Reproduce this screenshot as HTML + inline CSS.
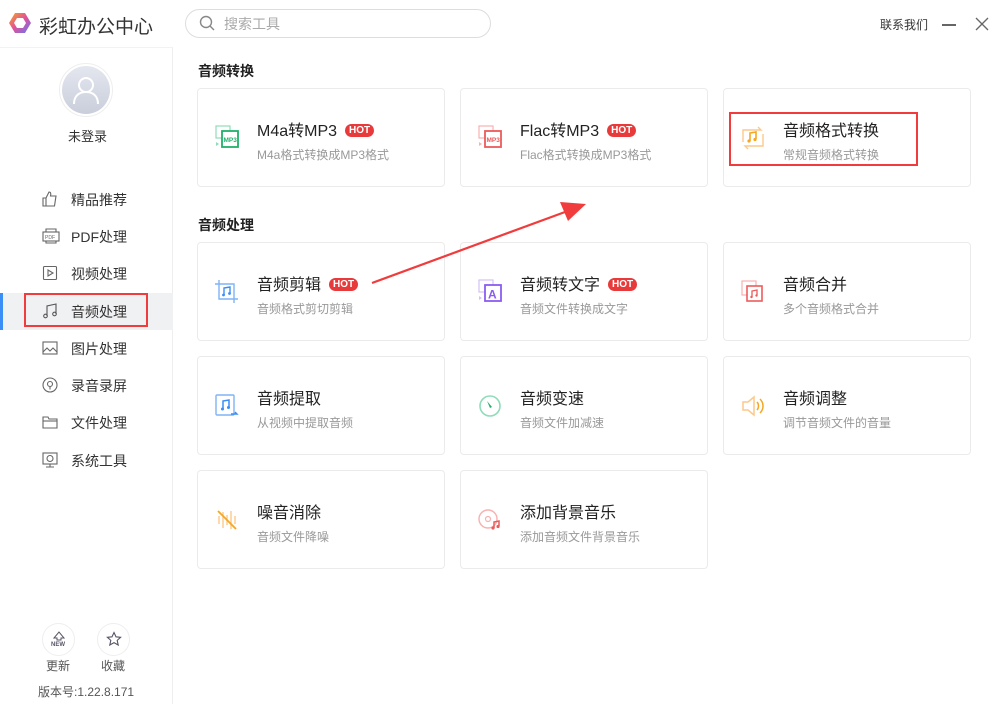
<!DOCTYPE html>
<html><head><meta charset="utf-8"><style>
*{margin:0;padding:0;box-sizing:border-box}
body{width:1000px;height:704px;background:#fff;font-family:"Liberation Sans","Noto Sans CJK SC",sans-serif;position:relative;overflow:hidden;color:#222}
.a{position:absolute}
.card{position:absolute;width:248px;height:99px;border:1px solid #ebebeb;border-radius:4px;background:#fff}
.card .t{position:absolute;left:59px;top:28px;font-size:16px;color:#222;white-space:nowrap}
.card .s{position:absolute;left:59px;top:57px;font-size:12px;color:#999;white-space:nowrap}
.card svg{position:absolute;left:16px;top:36px}
.hot{display:inline-block;background:#e83a3a;color:#fff;font-size:10px;font-weight:bold;border-radius:8px;padding:0 4px;line-height:13px;vertical-align:3px;margin-left:8px}
.nav{position:absolute;left:0;width:173px;height:37px;font-size:14px;color:#333}
.nav span{position:absolute;left:71px;top:9px}
.nav svg{position:absolute;left:42px;top:10px}
.sec{position:absolute;left:198px;font-size:14px;font-weight:bold;color:#222}
</style></head><body>
<!-- header -->
<svg class="a" style="left:8px;top:11px" width="24" height="24" viewBox="0 0 24 24"><defs><linearGradient id="g" x1="0" y1="0" x2="1" y2="1"><stop offset="0" stop-color="#f5a623"/><stop offset=".5" stop-color="#e0509b"/><stop offset="1" stop-color="#5b7cf5"/></linearGradient></defs><path d="M7 2h10l6 10-6 10H7L1 12z" fill="url(#g)"/><path d="M9 7h6l3 5-3 5H9l-3-5z" fill="#fff"/></svg>
<div class="a" style="left:39px;top:12px;font-size:19px;color:#333">彩虹办公中心</div>
<div class="a" style="left:185px;top:9px;width:306px;height:29px;border:1px solid #ddd;border-radius:15px"></div>
<svg class="a" style="left:199px;top:15px" width="16" height="16" viewBox="0 0 16 16"><circle cx="7" cy="7" r="5.5" fill="none" stroke="#888" stroke-width="1.4"/><path d="M11 11l4 4" stroke="#888" stroke-width="1.4"/></svg>
<div class="a" style="left:224px;top:14px;font-size:14px;color:#aaa">搜索工具</div>
<div class="a" style="left:880px;top:16px;font-size:12px;color:#333">联系我们</div>
<div class="a" style="left:942px;top:24px;width:14px;height:1.5px;background:#666"></div>
<svg class="a" style="left:975px;top:17px" width="14" height="14" viewBox="0 0 14 14"><path d="M1 1l12 12M13 1L1 13" stroke="#666" stroke-width="1.3"/></svg>
<!-- sidebar -->
<div class="a" style="left:0;top:47px;width:173px;height:657px;border-right:1px solid #eee;border-top:1px solid #f2f2f2"></div>
<div class="a" style="left:59px;top:63px;width:54px;height:54px;border-radius:50%;border:1px solid #eee;background:#fff"></div>
<div class="a" style="left:62px;top:66px;width:48px;height:48px;border-radius:50%;background:linear-gradient(#e4e7ef,#c9cedb)"></div>
<svg class="a" style="left:62px;top:66px" width="48" height="48" viewBox="0 0 48 48"><circle cx="24" cy="19" r="7" fill="none" stroke="#fff" stroke-width="2"/><path d="M12 38c0-8 5-12 12-12s12 4 12 12" fill="none" stroke="#fff" stroke-width="2"/></svg>
<div class="a" style="left:68px;top:126px;font-size:13px;color:#333">未登录</div>

<div class="nav" style="top:181px"><svg width="16" height="16" viewBox="0 0 16 16" fill="none" stroke="#666" stroke-width="1.1"><path d="M1 7h3v8H1zM4 7l3-6c2 0 2 2 1.5 4H14l-1.5 10H4"/></svg><span>精品推荐</span></div>
<div class="nav" style="top:218px"><svg width="18" height="16" viewBox="0 0 18 16" fill="none" stroke="#666" stroke-width="1.1"><rect x="1" y="4" width="16" height="9"/><path d="M4 4V1h10v3M4 13v2h10v-2"/><text x="3" y="11" font-size="5" fill="#666" stroke="none" font-family="Liberation Sans">PDF</text></svg><span>PDF处理</span></div>
<div class="nav" style="top:255px"><svg width="16" height="16" viewBox="0 0 16 16" fill="none" stroke="#666" stroke-width="1.1"><rect x="1.5" y="1.5" width="13" height="13" rx="1"/><path d="M6 5l5 3-5 3z"/></svg><span>视频处理</span></div>
<div class="a" style="left:0;top:293px;width:173px;height:37px;background:#f0f1f3"></div>
<div class="a" style="left:0;top:293px;width:3px;height:37px;background:#3a8ef6"></div>
<div class="nav" style="top:293px"><svg width="16" height="16" viewBox="0 0 16 16" fill="none" stroke="#555" stroke-width="1.1"><path d="M5 13V3l9-2v10"/><circle cx="3.5" cy="13" r="1.8"/><circle cx="12.5" cy="11" r="1.8"/></svg><span>音频处理</span></div>
<div class="a" style="left:24px;top:293px;width:124px;height:34px;border:2px solid #f03c3c"></div>
<div class="nav" style="top:330px"><svg width="16" height="16" viewBox="0 0 16 16" fill="none" stroke="#666" stroke-width="1.1"><rect x="1" y="2" width="14" height="12"/><path d="M1 12l4-4 3 3 3-3 4 4"/></svg><span>图片处理</span></div>
<div class="nav" style="top:367px"><svg width="16" height="16" viewBox="0 0 16 16" fill="none" stroke="#666" stroke-width="1.1"><circle cx="8" cy="8" r="7"/><circle cx="8" cy="7" r="2.5"/><path d="M8 9.5v3"/></svg><span>录音录屏</span></div>
<div class="nav" style="top:404px"><svg width="16" height="16" viewBox="0 0 16 16" fill="none" stroke="#666" stroke-width="1.1"><path d="M1 3h5l1 2h8v9H1z"/><path d="M1 7h14"/></svg><span>文件处理</span></div>
<div class="nav" style="top:442px"><svg width="16" height="16" viewBox="0 0 16 16" fill="none" stroke="#666" stroke-width="1.1"><rect x="1" y="1" width="14" height="11"/><circle cx="8" cy="6.5" r="3"/><path d="M4 15h8M8 12v3"/></svg><span>系统工具</span></div>

<div class="a" style="left:42px;top:623px;width:33px;height:33px;border-radius:50%;border:1px solid #eee"></div>
<svg class="a" style="left:49px;top:628px" width="20" height="20" viewBox="0 0 20 20"><path d="M5 10L10 4l5 6h-3v2H8v-2z" fill="none" stroke="#556" stroke-width="1"/><text x="2" y="18" font-size="6" font-weight="bold" fill="#556" font-family="Liberation Sans">NEW</text></svg>
<div class="a" style="left:97px;top:623px;width:33px;height:33px;border-radius:50%;border:1px solid #eee"></div>
<svg class="a" style="left:106px;top:631px" width="16" height="16" viewBox="0 0 16 16"><path d="M8 1.5l2 4.3 4.6.5-3.4 3.1 1 4.6L8 11.6 3.8 14l1-4.6L1.4 6.3 6 5.8z" fill="none" stroke="#556" stroke-width="1.1"/></svg>
<div class="a" style="left:46px;top:657px;font-size:12px;color:#555">更新</div>
<div class="a" style="left:101px;top:657px;font-size:12px;color:#555">收藏</div>
<div class="a" style="left:38px;top:683px;font-size:12px;color:#555">版本号:1.22.8.171</div>

<!-- content -->
<div class="sec" style="top:61px">音频转换</div>
<div class="sec" style="top:215px">音频处理</div>

<div class="card" style="left:197px;top:88px"><svg width="26" height="26" viewBox="0 0 26 26"><rect x="2" y="1" width="14" height="12" fill="none" stroke="#8fdcb8" stroke-width="1.2"/><rect x="8" y="6" width="16" height="16" fill="#fff" stroke="#1fb06a" stroke-width="1.8"/><text x="9.5" y="17" font-size="6.5" font-weight="bold" fill="#1fb06a" font-family="Liberation Sans">MP3</text><path d="M2 17l3 2-3 2z" fill="#8fdcb8"/></svg><div class="t">M4a转MP3<span class="hot">HOT</span></div><div class="s">M4a格式转换成MP3格式</div></div>
<div class="card" style="left:460px;top:88px"><svg width="26" height="26" viewBox="0 0 26 26"><rect x="2" y="1" width="14" height="12" fill="none" stroke="#f8b0b0" stroke-width="1.2"/><rect x="8" y="6" width="16" height="16" fill="#fff" stroke="#ec5b5b" stroke-width="1.8"/><text x="9.5" y="17" font-size="6.5" font-weight="bold" fill="#ec5b5b" font-family="Liberation Sans">MP3</text><path d="M2 17l3 2-3 2z" fill="#f8b0b0"/></svg><div class="t">Flac转MP3<span class="hot">HOT</span></div><div class="s">Flac格式转换成MP3格式</div></div>
<div class="card" style="left:723px;top:88px"><svg width="26" height="26" viewBox="0 0 26 26" fill="none"><path d="M3 17V5h18l-3-3M23 9v12H5l3 3" stroke="#fcc98a" stroke-width="1.4"/><path d="M10 16V8l6-1v7" stroke="#f5a623" stroke-width="1.6"/><circle cx="9" cy="16" r="1.6" fill="#f5a623"/><circle cx="15" cy="14.5" r="1.6" fill="#f5a623"/></svg><div class="t">音频格式转换</div><div class="s">常规音频格式转换</div></div>
<div class="a" style="left:729px;top:112px;width:189px;height:54px;border:2px solid #f03c3c"></div>

<div class="card" style="left:197px;top:242px"><svg width="26" height="26" viewBox="0 0 26 26" fill="none" stroke="#7fb4f5" stroke-width="1.4"><path d="M5 1v19h19M1 5h19v19"/><path d="M10 16V9l6-1v6" stroke="#3a8ef6"/><circle cx="9.5" cy="16" r="1.4" fill="#3a8ef6" stroke="none"/><circle cx="15.5" cy="14.5" r="1.4" fill="#3a8ef6" stroke="none"/></svg><div class="t">音频剪辑<span class="hot">HOT</span></div><div class="s">音频格式剪切剪辑</div></div>
<div class="card" style="left:460px;top:242px"><svg width="26" height="26" viewBox="0 0 26 26"><rect x="2" y="1" width="14" height="12" fill="none" stroke="#d4c0f7" stroke-width="1.2"/><rect x="8" y="6" width="16" height="16" fill="#fff" stroke="#8a5cf0" stroke-width="1.8"/><text x="11" y="19.5" font-size="12" font-weight="bold" fill="#8a5cf0" font-family="Liberation Sans">A</text><path d="M2 17l3 2-3 2z" fill="#d4c0f7"/></svg><div class="t">音频转文字<span class="hot">HOT</span></div><div class="s">音频文件转换成文字</div></div>
<div class="card" style="left:723px;top:242px"><svg width="26" height="26" viewBox="0 0 26 26"><rect x="2" y="2" width="14" height="14" fill="none" stroke="#f8b0b0" stroke-width="1.2"/><rect x="7" y="7" width="15" height="15" fill="#fff" stroke="#ec5b5b" stroke-width="1.6"/><path d="M12 18v-6l5-1v5" fill="none" stroke="#ec5b5b" stroke-width="1.3"/><circle cx="11.5" cy="18" r="1.2" fill="#ec5b5b"/><circle cx="16.5" cy="16.5" r="1.2" fill="#ec5b5b"/></svg><div class="t">音频合并</div><div class="s">多个音频格式合并</div></div>

<div class="card" style="left:197px;top:356px"><svg width="26" height="26" viewBox="0 0 26 26" fill="none"><rect x="2" y="2" width="18" height="20" rx="1" stroke="#7fb4f5" stroke-width="1.4"/><path d="M9 16V8l6-1v7" stroke="#3a8ef6" stroke-width="1.5"/><circle cx="8.5" cy="16" r="1.5" fill="#3a8ef6"/><circle cx="14.5" cy="14.5" r="1.5" fill="#3a8ef6"/><path d="M17 21h6l-2-2" stroke="#3a8ef6" stroke-width="1.4"/></svg><div class="t">音频提取</div><div class="s">从视频中提取音频</div></div>
<div class="card" style="left:460px;top:356px"><svg width="26" height="26" viewBox="0 0 26 26" fill="none"><circle cx="13" cy="13" r="10" stroke="#8fdcb8" stroke-width="1.6"/><path d="M10 8l5 6-2 1z" fill="#1fb06a"/></svg><div class="t">音频变速</div><div class="s">音频文件加减速</div></div>
<div class="card" style="left:723px;top:356px"><svg width="26" height="26" viewBox="0 0 26 26" fill="none"><path d="M3 9h5l6-5v18l-6-5H3z" stroke="#fcc98a" stroke-width="1.5"/><path d="M17 9c2 2 2 6 0 8M20 6c4 4 4 10 0 14" stroke="#f5a623" stroke-width="1.5"/></svg><div class="t">音频调整</div><div class="s">调节音频文件的音量</div></div>

<div class="card" style="left:197px;top:470px"><svg width="26" height="26" viewBox="0 0 26 26" fill="none" stroke="#fcc98a" stroke-width="1.4"><path d="M5 9v8M9 5v16M13 8v10M17 4v18M21 9v8"/><path d="M4 4l18 18" stroke="#f5a623" stroke-width="1.8"/></svg><div class="t">噪音消除</div><div class="s">音频文件降噪</div></div>
<div class="card" style="left:460px;top:470px"><svg width="26" height="26" viewBox="0 0 26 26" fill="none"><circle cx="11" cy="12" r="9" stroke="#f8b0b0" stroke-width="1.4"/><circle cx="11" cy="12" r="2.5" stroke="#f8b0b0" stroke-width="1.2"/><path d="M17 21v-6l5-1v5" stroke="#ec5b5b" stroke-width="1.5"/><circle cx="16" cy="21" r="1.6" fill="#ec5b5b"/><circle cx="21" cy="19.5" r="1.6" fill="#ec5b5b"/></svg><div class="t">添加背景音乐</div><div class="s">添加音频文件背景音乐</div></div>

<!-- arrow -->
<svg class="a" style="left:0;top:0" width="1000" height="704"><path d="M372 283L565 212" stroke="#f03c3c" stroke-width="2.2"/><path d="M586 204L560 202L568 221z" fill="#f03c3c"/></svg>
</body></html>
